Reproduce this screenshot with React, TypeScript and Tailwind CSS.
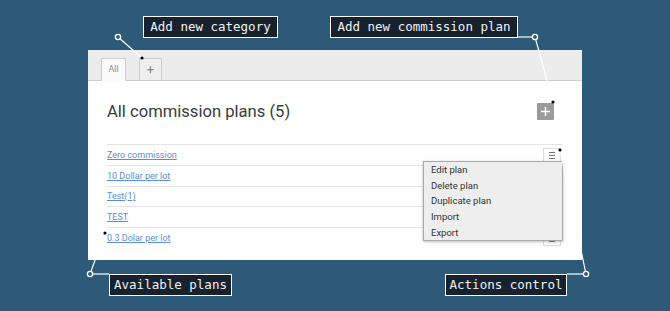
import React from "react";

const mono = { fontFamily: '"DejaVu Sans Mono", "Liberation Mono", monospace' };
const sans = { fontFamily: 'Roboto, "Liberation Sans", sans-serif' };

function Callout({ text, className }: { text: string; className: string }) {
  return (
    <div
      className={`h-[22px] border border-white bg-[#18222f] text-[#eef2f5] text-[12.5px] flex items-center justify-center leading-none ${className}`}
      style={mono}
    >
      {text}
    </div>
  );
}

function MenuButton() {
  return (
    <div className="w-[18px] h-[15px] mr-[2px] border border-[#dcdcdc] bg-white flex flex-col items-center justify-center gap-[2px]">
      <span className="block w-[6px] h-px bg-[#777]" />
      <span className="block w-[6px] h-px bg-[#777]" />
      <span className="block w-[6px] h-px bg-[#777]" />
    </div>
  );
}

const plans = [
  { name: "Zero commission", h: "h-[21px]" },
  { name: "10 Dollar per lot", h: "h-[21px]" },
  { name: "Test(1)", h: "h-[20px]" },
  { name: "TEST", h: "h-[21px]" },
  { name: "0.3 Dolar per lot", h: "h-[21px]" },
];

export default function App() {
  return (
    <div className="relative w-[670px] h-[311px] bg-[#2d5a78] overflow-hidden" style={sans}>
      <div className="flex pt-[16px]">
        <Callout text="Add new category" className="ml-[143px] w-[135px]" />
        <Callout text="Add new commission plan" className="ml-[52px] w-[188px]" />
      </div>

      <div className="ml-[88px] mt-[12px] w-[494px] h-[210px] bg-white flex flex-col">
        <div className="h-[31px] bg-[#ececec] border-b border-[#cdcdcd] flex items-end pl-[13px] gap-[13px]">
          <div className="w-[25px] h-[23px] -mb-px bg-[#fafafa] border border-b-0 border-[#cdcdcd] flex items-center justify-center text-[9px] text-[#8a8a8a]">
            All
          </div>
          <div className="w-[23px] h-[23px] -mb-px bg-[#efefef] border border-[#cdcdcd] flex items-center justify-center text-[13px] text-[#888] leading-none">
            +
          </div>
        </div>

        <div className="px-[19px]">
          <div className="mt-[21px] flex items-start justify-between">
            <div className="text-[16.6px] leading-[20px] text-[#3a3a3a]">All commission plans (5)</div>
            <div className="mt-[1px] mr-[9px] w-[17px] h-[17px] bg-[#9b9b9b] rounded-[1px] flex items-center justify-center">
              <svg width="11" height="11" viewBox="0 0 11 11">
                <path d="M5.5 1v9M1 5.5h9" stroke="#fff" strokeWidth="1.6" />
              </svg>
            </div>
          </div>

          <div className="relative mt-[22px]">
            {plans.map((p) => (
              <div key={p.name} className={`${p.h} border-t border-[#e4e4e4] flex items-center justify-between`}>
                <a className="text-[9px] text-[#5b8dd6] underline leading-none">{p.name}</a>
                <MenuButton />
              </div>
            ))}
            <div className="absolute right-0 top-[17px] w-[140px] h-[80px] bg-[#eeeeee] border border-[#a8a8a8] shadow-[0_1px_3px_rgba(0,0,0,0.25)]">
              {["Edit plan", "Delete plan", "Duplicate plan", "Import", "Export"].map((t) => (
                <div key={t} className="h-[15.8px] pl-[7px] flex items-center text-[9.5px] text-[#333]">
                  {t}
                </div>
              ))}
            </div>
          </div>
        </div>
      </div>

      <div className="flex mt-[14px]">
        <Callout text="Available plans" className="ml-[109px] w-[123px]" />
        <Callout text="Actions control" className="ml-[213px] w-[122px]" />
      </div>

      <svg className="absolute inset-0 pointer-events-none" width="670" height="311" viewBox="0 0 670 311">
        <g stroke="#ffffff" strokeWidth="1.2" fill="none">
          <line x1="118" y1="37" x2="142" y2="58" />
          <line x1="518" y1="37" x2="535" y2="37" />
          <line x1="535" y1="37" x2="553" y2="102" />
          <line x1="90" y1="274" x2="105" y2="233" />
          <line x1="90" y1="274" x2="109" y2="274" />
          <line x1="567" y1="274" x2="586" y2="274" />
          <line x1="586" y1="274" x2="560" y2="150" />
        </g>
        <g stroke="#ffffff" strokeWidth="1.4" fill="#2d5a78">
          <circle cx="118" cy="37" r="2.6" />
          <circle cx="535" cy="37" r="2.6" />
          <circle cx="90" cy="274" r="2.6" />
          <circle cx="586" cy="274" r="2.6" />
        </g>
        <g fill="#000">
          <circle cx="142" cy="58" r="1.6" />
          <circle cx="553" cy="102" r="1.6" />
          <circle cx="560" cy="150" r="1.6" />
          <circle cx="105" cy="233" r="1.6" />
        </g>
      </svg>
    </div>
  );
}
